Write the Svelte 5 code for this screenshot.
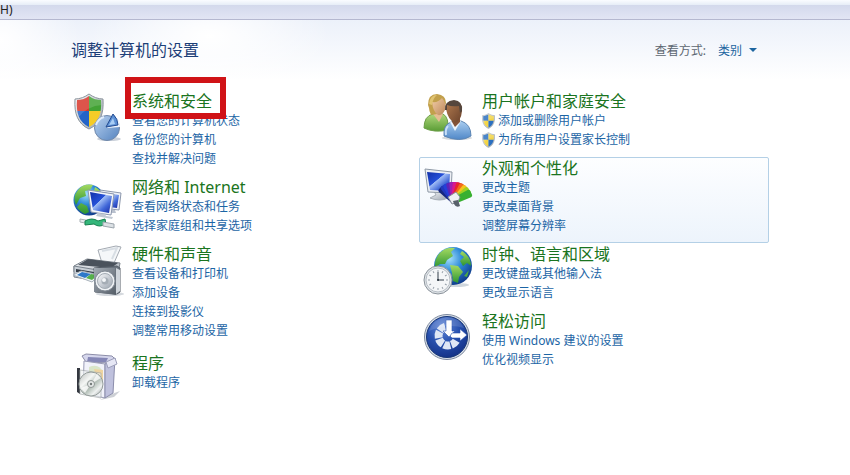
<script>
    const columns = [
        [
            {
                icon: 'security',
                title: '系统和安全',
                marked: true,
                tasks: ['查看您的计算机状态', '备份您的计算机', '查找并解决问题']
            },
            {
                icon: 'network',
                title: '网络和 Internet',
                tasks: ['查看网络状态和任务', '选择家庭组和共享选项']
            },
            {
                icon: 'hardware',
                title: '硬件和声音',
                tasks: ['查看设备和打印机', '添加设备', '连接到投影仪', '调整常用移动设置']
            },
            {
                icon: 'programs',
                title: '程序',
                spaced: true,
                tasks: ['卸载程序']
            }
        ],
        [
            {
                icon: 'users',
                title: '用户帐户和家庭安全',
                admin: true,
                tasks: ['添加或删除用户帐户', '为所有用户设置家长控制']
            },
            {
                icon: 'appearance',
                title: '外观和个性化',
                active: true,
                tasks: ['更改主题', '更改桌面背景', '调整屏幕分辨率']
            },
            {
                icon: 'clock',
                title: '时钟、语言和区域',
                tasks: ['更改键盘或其他输入法', '更改显示语言']
            },
            {
                icon: 'access',
                title: '轻松访问',
                tasks: ['使用 Windows 建议的设置', '优化视频显示']
            }
        ]
    ]

    // colour swatches of the appearance fan, left to right
    const swatches = ['#16277f', '#2038bd', '#2440d8', '#5a25b8', '#a01fb0', '#d81a8c', '#e8252f', '#f26a1b', '#f5c31c', '#9fd021', '#37b030']
    const ticks = [0, 30, 60, 90, 120, 150, 180, 210, 240, 270, 300, 330]
    let view = 'category'
</script>

<svg class="defs" aria-hidden="true">
    <defs>
        <radialGradient id="ocean" cx="0.4" cy="0.3" r="0.75">
            <stop offset="0" stop-color="#a5e0fb" />
            <stop offset="0.45" stop-color="#2f8bd8" />
            <stop offset="1" stop-color="#0c3484" />
        </radialGradient>
        <linearGradient id="land" x1="0" y1="0" x2="0" y2="1">
            <stop offset="0" stop-color="#a5da62" />
            <stop offset="1" stop-color="#2b9432" />
        </linearGradient>
        <linearGradient id="screen" x1="0" y1="0" x2="1" y2="1">
            <stop offset="0" stop-color="#1230a8" />
            <stop offset="0.42" stop-color="#2550d8" />
            <stop offset="0.44" stop-color="#9fbcf5" />
            <stop offset="0.7" stop-color="#4067d8" />
            <stop offset="1" stop-color="#1426a0" />
        </linearGradient>
        <linearGradient id="metal" x1="0" y1="0" x2="1" y2="1">
            <stop offset="0" stop-color="#f8f9fb" />
            <stop offset="1" stop-color="#9aa3ae" />
        </linearGradient>
        <linearGradient id="dark" x1="0" y1="0" x2="1" y2="1">
            <stop offset="0" stop-color="#a3abb4" />
            <stop offset="1" stop-color="#545d67" />
        </linearGradient>
        <linearGradient id="pie" x1="0" y1="0" x2="1" y2="1">
            <stop offset="0" stop-color="#b9d2f0" />
            <stop offset="1" stop-color="#5483bf" />
        </linearGradient>
        <linearGradient id="green" x1="0" y1="0" x2="0" y2="1">
            <stop offset="0" stop-color="#b0d77c" />
            <stop offset="1" stop-color="#5a9d35" />
        </linearGradient>
        <linearGradient id="blue" x1="0" y1="0" x2="0" y2="1">
            <stop offset="0" stop-color="#a9cdf0" />
            <stop offset="1" stop-color="#5088c8" />
        </linearGradient>
        <linearGradient id="skin" x1="0" y1="0" x2="1" y2="1">
            <stop offset="0" stop-color="#f1cda6" />
            <stop offset="1" stop-color="#bd875b" />
        </linearGradient>
        <linearGradient id="brown" x1="0" y1="0" x2="1" y2="1">
            <stop offset="0" stop-color="#b47c50" />
            <stop offset="1" stop-color="#69412a" />
        </linearGradient>
        <linearGradient id="disc" x1="0" y1="0" x2="1" y2="1">
            <stop offset="0" stop-color="#b8bdbb" />
            <stop offset="0.35" stop-color="#f5f7f5" />
            <stop offset="0.55" stop-color="#b0bcb4" />
            <stop offset="0.75" stop-color="#eef1f0" />
            <stop offset="1" stop-color="#999f9f" />
        </linearGradient>
        <radialGradient id="badge" cx="0.4" cy="0.25" r="0.8">
            <stop offset="0" stop-color="#6389d8" />
            <stop offset="0.5" stop-color="#2750ae" />
            <stop offset="1" stop-color="#122f84" />
        </radialGradient>
        <clipPath id="shield">
            <path d="M15 3C19 6 23 7 27 7C28 20 25 29 15 34C5 29 2 20 3 7C7 7 11 6 15 3Z" />
        </clipPath>
    </defs>
</svg>

{#snippet shield(c1, c2, c3, c4)}
    <path d="M15 1C19 4 24 6 29 6C30 21 26 31 15 36C4 31 0 21 1 6C6 6 11 4 15 1Z" fill="url(#metal)" stroke="#8b949c" />
    <g clip-path="url(#shield)">
        <rect width="15" height="18" fill={c1} />
        <rect x="15" width="15" height="18" fill={c2} />
        <rect y="18" width="15" height="18" fill={c3} />
        <rect x="15" y="18" width="15" height="18" fill={c4} />
        <path d="M0 0H30V12Q14 12 4 25H0Z" fill="#fff" opacity="0.15" />
    </g>
{/snippet}

{#snippet icon(name)}
    <svg class="icon" viewBox="0 0 48 48" aria-hidden="true">
        {#if name === 'security'}
            {@render shield('#d8382c', '#43a335', '#2464c8', '#f5cc27')}
            <ellipse cx="35" cy="46" rx="12" ry="2" fill="#cbd1da" />
            <circle cx="33" cy="35" r="12.5" fill="url(#pie)" stroke="#7088aa" />
            <path d="M22 32A12 12 0 0 1 30 24" fill="none" stroke="#e0edfb" stroke-width="2" />
            <path d="M33 35L40 22Q46 26 46 34Z" fill="#f0f6fd" />
            <path d="M32 34L39 21Q44 26 44 32Z" fill="#5d91d5" stroke="#234b91" />
            <path d="M35 32L39 25L41 31Z" fill="#a9cef5" />
        {:else if name === 'network'}
            <circle cx="15" cy="21" r="15.5" fill="url(#ocean)" />
            <path d="M4 11Q10 4 19 6L16 11L11 12L12 17L6 19L2 26Q-2 18 4 11Z" fill="url(#land)" />
            <path d="M21 8Q27 11 29 17L24 16L20 12ZM7 24L13 27L15 33L11 35Q5 32 3 28Z" fill="url(#land)" />
            <path d="M26 11L47 14L45 31L27 29Z" fill="#eef1f7" stroke="#8d98ad" />
            <path d="M28 13L45 16L43 29L28 27Z" fill="url(#screen)" />
            <path d="M35 30L41 31L42 34L34 34Z" fill="#b9c1ce" />
            <path d="M14 11L40 15L37 36L17 33Z" fill="#f5f7fb" stroke="#8d98ad" />
            <path d="M16 13L38 17L35 34L19 31Z" fill="url(#screen)" />
            <path d="M24 34L31 35L32 37L39 38L38 40L22 37Z" fill="#c2c9d3" />
            <path d="M6 40L17 42L16 45L6 43Z" fill="#e5e9ec" stroke="#a8b0b4" />
            <path d="M11 42Q18 38 24 42L31 40L32 45Q25 49 20 45L11 46Z" fill="#34b67a" stroke="#16804e" />
            <path d="M29 43L40 45V49L29 47Z" fill="#dce1e5" stroke="#9ca5ad" />
        {:else if name === 'hardware'}
            <ellipse cx="36" cy="48" rx="14" ry="2" fill="#d5d9de" />
            <path d="M24 4L42 0L47 1L40 17L28 17Z" fill="#f5f7f9" stroke="#a4aab2" />
            <path d="M28 5L43 2L38 13" fill="none" stroke="#d8dee4" stroke-width="2" />
            <path d="M0 20L13 13L46 17L44 28L27 32L0 26Z" fill="url(#metal)" stroke="#777f88" />
            <path d="M4 19L14 13L44 17L37 22Z" fill="#4a525c" />
            <path d="M0 20L29 25V36L0 31Z" fill="#c8cfd6" stroke="#7a838d" />
            <path d="M2 23L26 27V30L2 26Z" fill="#323b46" />
            <path d="M-1 29L7 25L26 29L18 36Z" fill="#eef3f7" stroke="#a8b1ba" />
            <path d="M3 29L8 26L17 28L11 32Z" fill="#2c78c9" />
            <path d="M12 32L17 28L24 29L18 34Z" fill="#55b04a" />
            <path d="M20 22L43 20L46 22V46L43 48L21 46Z" fill="#6a737e" stroke="#535b65" />
            <path d="M20 22L41 22L42 49L20 46Z" fill="url(#dark)" />
            <path d="M42 22L46 24V45L42 48Z" fill="#cfd5db" />
            <circle cx="31" cy="35" r="10" fill="#eef1f4" stroke="#818a94" />
            <circle cx="31" cy="35" r="7.5" fill="url(#metal)" stroke="#a5adb5" />
            <circle cx="31" cy="35" r="3.5" fill="#a5adb5" />
            <circle cx="30" cy="34" r="2" fill="#f4f6f8" />
        {:else if name === 'programs'}
            <path d="M35 40L46 36L40 42L26 45Z" fill="#cdd0d5" />
            <path d="M8 1L12 -1L38 1L41 4L37 8L12 7Z" fill="#d5d6ec" stroke="#8d8ea9" />
            <path d="M14 2L34 3L32 7H13Z" fill="#8587b6" />
            <path d="M10 6L31 9V43L9 38Z" fill="#f1f2fa" stroke="#9a9cb6" />
            <path d="M31 9L41 3L39 38L31 43Z" fill="#bfc1dd" stroke="#8b8dab" />
            <path d="M32 7L41 3L43 9L34 13Z" fill="#e6e7f5" stroke="#9c9eb9" />
            <path d="M15 12Q26 8 29 18L27 28L15 24Z" fill="#d9e5c9" />
            <path d="M20 14L29 15V26L22 22Z" fill="#eed4a0" />
            <path d="M3 13H6V39L3 37Z" fill="#343840" />
            <path d="M6 15L27 18V43L6 39Z" fill="#edf1f0" opacity="0.65" stroke="#a2a8a8" />
            <circle cx="17" cy="29" r="12" fill="url(#disc)" stroke="#959d9b" />
            <path d="M17 29L23 19L27 23ZM17 29L7 33L11 38Z" fill="#fff" opacity="0.75" />
            <circle cx="17" cy="29" r="3.5" fill="#e6e9e8" stroke="#8f9694" />
            <circle cx="17" cy="29" r="1.2" fill="#737a79" />
        {:else if name === 'users'}
            <ellipse cx="33" cy="45" rx="15" ry="2" fill="#d5d9dd" />
            <path d="M0 35Q0 23 9 21L19 21Q25 24 24 37Q10 40 0 35Z" fill="url(#green)" stroke="#6c9d48" />
            <path d="M9 21L15 29L19 21Z" fill="#e5bd92" />
            <path d="M4 12Q4 1 13 1Q22 2 22 10L19 20L7 22Q5 18 5 15Z" fill="#c2a04c" />
            <path d="M8 9Q14 10 18 5Q23 11 21 17Q18 23 14 22Q9 19 8 9Z" fill="url(#skin)" />
            <path d="M5 11Q6 2 13 2Q9 5 8 12Z" fill="#e0c472" />
            <path d="M20 43Q19 32 27 29L37 28Q47 31 47 43Q36 50 20 43Z" fill="url(#blue)" stroke="#5d86b4" />
            <path d="M26 29L31 38L37 28Z" fill="#edf4fb" />
            <path d="M28 24H36V29L31 34L28 29Z" fill="#845237" />
            <path d="M22 16Q22 8 31 8Q39 9 38 18Q37 28 31 30Q24 27 22 16Z" fill="url(#brown)" />
            <path d="M21 17Q20 8 30 7Q39 8 38 18L36 20L35 13Q28 14 23 12L23 17Z" fill="#55463d" />
            <path d="M24 33Q21 36 22 42" fill="none" stroke="#c8e0f8" stroke-width="2" />
        {:else if name === 'appearance'}
            <path d="M10 31H18L20 35L24 38Q16 42 6 38L12 35Z" fill="url(#metal)" stroke="#a7afb7" />
            <path d="M1 9L28 12L27 33L4 32Z" fill="#eceff4" stroke="#8d98a5" />
            <path d="M3 12L26 14L25 31L6 30Z" fill="url(#screen)" />
            {#each swatches as color, i}
                <path
                    d="M27 41L26 24Q26 22 28 22H32Q34 22 34 24L33 41Z"
                    fill={color}
                    transform="rotate({i * 11 - 46} 30 41)"
                />
            {/each}
            <path d="M24 37L32 32L36 37L34 42L28 44Z" fill="#eef0f2" stroke="#888f96" />
            <path d="M29 41L34 40L36 46Q32 48 30 44Z" fill="#59616b" />
        {:else if name === 'clock'}
            <ellipse cx="31" cy="39" rx="14" ry="2" fill="#cfd6dc" />
            <circle cx="29" cy="20" r="19" fill="url(#ocean)" />
            <path d="M14 9Q21 0 31 2L27 6L29 10L23 14L21 18L16 18L11 22Q10 15 14 9Z" fill="url(#land)" />
            <path d="M38 5Q47 11 47 20L43 17L39 20L36 15L40 11L36 8Z" fill="url(#land)" />
            <path d="M26 19L34 20L39 26L35 31L34 37L29 35L28 27Z" fill="url(#land)" />
            <path d="M45 24L43 31L40 30Z" fill="#4ba948" />
            <circle cx="14" cy="34" r="14" fill="#dfe3e7" stroke="#8b939b" />
            <circle cx="14" cy="34" r="12" fill="#f4f6f8" stroke="#b7bec5" />
            {#each ticks as angle}
                <path d="M14 24V26" stroke="#98a1aa" transform="rotate({angle} 14 34)" />
            {/each}
            <path d="M14 26V34H20" fill="none" stroke="#35414d" />
            <circle cx="14" cy="34" r="1" fill="#1f2a34" />
        {:else if name === 'access'}
            <circle cx="23" cy="24" r="22.5" fill="#d9dfe8" stroke="#7c899e" />
            <circle cx="23" cy="24" r="20.5" fill="url(#badge)" stroke="#173675" />
            <path
                d="M32.2 27.8A9.5 9.5 0 1 1 21.5 13.8"
                fill="none"
                stroke="#dfe7f5"
                stroke-width="8"
                stroke-dasharray="6.4 1.1"
            />
            <path d="M22 7H28V18H31L25 24L19 18H22Z" fill="#fff" stroke="#2750ae" stroke-width="0.6" />
            <path d="M28 20H36V16L43 22L36 28V25H28L26 23Z" fill="#fff" stroke="#2750ae" stroke-width="0.6" />
            <path d="M5 18Q9 6 22 4Q35 4 40 15Q24 10 5 18Z" fill="#fff" opacity="0.14" />
        {/if}
    </svg>
{/snippet}

<div class="menubar">
    <button type="button">H)</button>
</div>

<main>
    <header>
        <h1>调整计算机的设置</h1>
        <div class="view">
            <label for="view">查看方式:</label>
            <div class="picker">
                <select id="view" bind:value={view}>
                    <option value="category">类别</option>
                </select>
                <svg viewBox="0 0 8 4" aria-hidden="true"><path d="M0 0H8L4 4Z" fill="#1c65a0" /></svg>
            </div>
        </div>
    </header>

    <div class="columns">
        {#each columns as categories}
            <div class="column">
                {#each categories as category}
                    <section class:active={category.active} class:spaced={category.spaced}>
                        {@render icon(category.icon)}
                        <div class="text">
                            <h2 class:marked={category.marked}><a href="#{category.icon}">{category.title}</a></h2>
                            <ul>
                                {#each category.tasks as task}
                                    <li>
                                        {#if category.admin}
                                            <svg class="uac" viewBox="0 0 30 37" aria-hidden="true">
                                                {@render shield('#2c70c0', '#f3d548', '#f3d548', '#2c70c0')}
                                            </svg>
                                        {/if}
                                        <a href="#{category.icon}">{task}</a>
                                    </li>
                                {/each}
                            </ul>
                        </div>
                    </section>
                {/each}
            </div>
        {/each}
    </div>
</main>

<style>
    :global(body) {
        margin: 0;
        background: #fff;
        font-family: 'Noto Sans', 'Noto Sans CJK SC', sans-serif;
        font-size: 12px;
    }

    .defs {
        position: absolute;
        width: 0;
        height: 0;
    }

    .menubar {
        display: flex;
        height: 19px;
        border-bottom: 1px solid #b5b8d0;
        background: linear-gradient(#fafcff 0, #e6edf7 5px, #d3d9ec 5px, #e2e5f4 100%);
    }

    .menubar button {
        padding: 0;
        border: 0;
        background: none;
        color: #222;
        font-family: inherit;
        font-size: 12px;
        line-height: 18px;
    }

    main {
        padding: 0 81px 24px 69px;
        background:
            radial-gradient(ellipse 120px 60px at 210px 16px, #fff, transparent),
            radial-gradient(ellipse 80px 70px at 0 20px, #fff, transparent),
            linear-gradient(#ecf1fa, #fff 60px);
    }

    header {
        box-sizing: border-box;
        display: flex;
        align-items: center;
        justify-content: space-between;
        height: 70px;
        padding: 0 12px 10px 2px;
    }

    h1 {
        margin: 0;
        color: #1d3f78;
        font-size: 16px;
        font-weight: 400;
        line-height: 20px;
    }

    .view {
        display: flex;
        align-items: center;
        gap: 12px;
        color: #5c6670;
    }

    .picker {
        display: flex;
        align-items: center;
        gap: 6px;
    }

    .picker svg {
        width: 8px;
        height: 4px;
    }

    select {
        appearance: none;
        padding: 0;
        border: 0;
        background: none;
        color: #1c65a0;
        font-family: inherit;
        font-size: 12px;
    }

    .columns {
        display: grid;
        grid-template-columns: 1fr 1fr;
    }

    section {
        display: flex;
        align-items: flex-start;
        gap: 10px;
        padding: 1px 4px 7px;
        border: 1px solid transparent;
        border-radius: 2px;
    }

    section.active {
        border-color: #b4d0e6;
        background: linear-gradient(#fdfeff, #edf4fc);
    }

    section.spaced {
        margin-top: 4px;
    }

    .icon {
        flex: none;
        width: 48px;
        height: 48px;
        margin: 1px 0 -16px;
        overflow: visible;
    }

    h2 {
        position: relative;
        width: fit-content;
        margin: 0;
        font-size: 16px;
        font-weight: 400;
        line-height: 19px;
    }

    h2 a {
        color: #1a7420;
    }

    /* red frame round the highlighted category */
    h2.marked::after {
        content: '';
        position: absolute;
        inset: -15px -14px -8px -7px;
        border: 6px solid #d01317;
        pointer-events: none;
    }

    ul {
        margin: 0;
        padding: 0;
        list-style: none;
    }

    li {
        display: flex;
        align-items: center;
        gap: 3px;
        height: 19px;
        line-height: 19px;
    }

    li a {
        color: #1c65a5;
    }

    a {
        text-decoration: none;
        white-space: nowrap;
    }

    a:hover {
        text-decoration: underline;
    }

    .uac {
        width: 13px;
        height: 16px;
    }
</style>
